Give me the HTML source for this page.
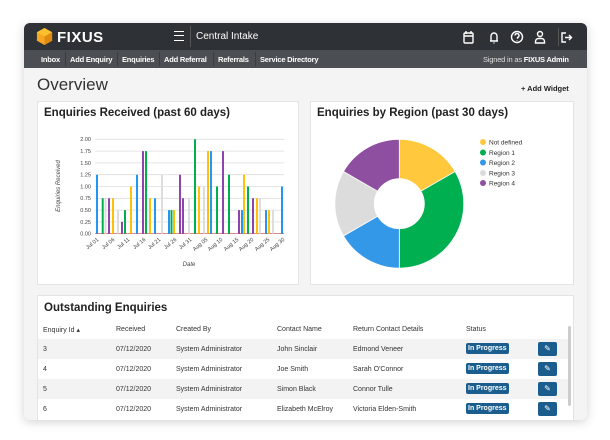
<!DOCTYPE html>
<html><head><meta charset="utf-8"><style>
*{box-sizing:border-box;margin:0;padding:0}
body{width:610px;height:440px;background:#fff;font-family:"Liberation Sans",Arial,sans-serif;position:relative;overflow:hidden}
.frame{position:absolute;left:24px;top:23px;width:563px;height:397px;background:#f4f4f4;border-radius:6px;box-shadow:0 2px 10px rgba(0,0,0,.18);overflow:hidden}
.hdr{position:absolute;left:0;top:0;width:563px;height:27px;background:#2e3135}
.nav{position:absolute;left:0;top:27px;width:563px;height:18px;background:#4b4e52;color:#fff;font-size:7.5px;font-weight:bold;letter-spacing:-.2px}
.nav span{position:absolute;top:5px}
.nav i{position:absolute;top:2px;width:1px;height:14px;background:#3a3d40}
.panel{position:absolute;background:#fff;border:1px solid #e4e4e4}
.t{position:absolute;font-size:11.5px;font-weight:bold;color:#222}
.row{position:absolute;left:0;width:530px;height:20px;font-size:7px;color:#333}
.row span{position:absolute;top:7px}
.badge{position:absolute;left:428px;background:#1b5e8e;color:#fff;font-weight:bold;font-size:7px;padding:2px 2px;border-radius:2px;top:4px!important}
.btn{position:absolute;left:500px;top:3px;width:19px;height:14px;background:#1b5e8e;border-radius:2px;color:#fff;font-size:8px;text-align:center;line-height:14px}
</style></head><body>
<div class="frame">
 <div class="hdr">
  <svg style="position:absolute;left:11px;top:4px" width="19" height="19" viewBox="0 0 20 20"><polygon points="10,1 18,5.5 18,14.5 10,19 2,14.5 2,5.5" fill="#f5a623"/><polygon points="10,1 18,5.5 10,10 2,5.5" fill="#fbc02d"/><polygon points="10,10 18,5.5 18,14.5 10,19" fill="#e08a10"/></svg>
  <div style="position:absolute;left:33px;top:6px;color:#fff;font-size:15px;font-weight:bold;letter-spacing:.5px">FIXUS</div>
  <div style="position:absolute;left:150px;top:8px;width:10px;height:10px;border-top:1.5px solid #fff;border-bottom:1.5px solid #fff"><div style="margin-top:3px;border-top:1.5px solid #fff"></div></div>
  <div style="position:absolute;left:166px;top:3px;width:1px;height:21px;background:#555"></div>
  <div style="position:absolute;left:172px;top:8px;color:#fff;font-size:10px">Central Intake</div>
  <svg style="position:absolute;left:438px;top:7px" width="120" height="14" viewBox="0 0 120 14" fill="none" stroke="#fff" stroke-width="1.4">
   <rect x="2" y="3" width="9" height="10" rx="1"/><line x1="2" y1="6" x2="11" y2="6"/><line x1="4" y1="1" x2="4" y2="4"/><line x1="9" y1="1" x2="9" y2="4"/>
   <path d="M28 11 H36 M29 11 V6 a3 3 0 0 1 6 0 V11 M32 12.5 v1"/>
   <circle cx="55" cy="7" r="5.5"/><path d="M53 5.5 a2 2 0 1 1 2.5 2 v1.2 M55 10.2 v.6"/>
   <circle cx="78" cy="4" r="2.5"/><path d="M73.5 13 v-1.5 a3 3 0 0 1 3-3 h3 a3 3 0 0 1 3 3 V13 Z"/>
   <path d="M104 3 h-4 v9 h4 M103 7.5 h6 M107 5 l2.5 2.5 -2.5 2.5"/>
  </svg>
  <div style="position:absolute;left:534px;top:5px;width:1px;height:18px;background:#555"></div>
 </div>
 <div class="nav">
  <span style="left:17px">Inbox</span><i style="left:41px"></i><span style="left:46px">Add Enquiry</span><i style="left:93px"></i><span style="left:98px">Enquiries</span><i style="left:135px"></i><span style="left:140px">Add Referral</span><i style="left:189px"></i><span style="left:194px">Referrals</span><i style="left:231px"></i><span style="left:236px">Service Directory</span>
  <span style="left:459px;font-weight:normal;color:#ddd">Signed in as <b style="color:#fff">FIXUS Admin</b></span>
 </div>
 <div style="position:absolute;left:13px;top:52px;font-size:17px;color:#333">Overview</div>
 <div style="position:absolute;left:497px;top:61px;font-size:7.5px;font-weight:bold;color:#222">+ Add Widget</div>

 <div class="panel" style="left:13px;top:78px;width:262px;height:184px">
  <div class="t" style="left:6px;top:5px">Enquiries Received (past 60 days)</div>
  <svg style="position:absolute;left:0;top:0" width="262" height="184" viewBox="37 101 262 184" font-family="Liberation Sans,Arial,sans-serif">
   <g stroke="#ddd" stroke-width=".8">
    <line x1="94" y1="138.3" x2="283" y2="138.3"/><line x1="94" y1="150.1" x2="283" y2="150.1"/><line x1="94" y1="161.9" x2="283" y2="161.9"/><line x1="94" y1="173.7" x2="283" y2="173.7"/><line x1="94" y1="185.5" x2="283" y2="185.5"/><line x1="94" y1="197.3" x2="283" y2="197.3"/><line x1="94" y1="209.1" x2="283" y2="209.1"/><line x1="94" y1="220.9" x2="283" y2="220.9"/>
   </g>
   <line x1="94" y1="232.7" x2="283" y2="232.7" stroke="#c44" stroke-width=".6"/>
   <g font-size="5.5" fill="#444" text-anchor="end">
    <text x="90" y="140">2.00</text><text x="90" y="152">1.75</text><text x="90" y="164">1.50</text><text x="90" y="175.5">1.25</text><text x="90" y="187.5">1.00</text><text x="90" y="199">0.75</text><text x="90" y="211">0.50</text><text x="90" y="223">0.25</text><text x="90" y="234.5">0.00</text>
   </g>
   <g stroke-width="2">
    <path stroke="#2196f3" d="M96 232.7V173.7M136 232.7V173.7M154 232.7V197.3M168 232.7V209.1M210 232.7V150.1M241 232.7V209.1M265 232.7V209.1M281 232.7V185.5"/>
    <path stroke="#00b050" d="M101.7 232.7V197.3M124 232.7V209.1M145 232.7V150.1M170.5 232.7V209.1M194 232.7V138.3M216 232.7V185.5M228 232.7V173.7M247 232.7V185.5"/>
    <path stroke="#ddd" d="M104.5 232.7V197.3M117 232.7V209.1M161 232.7V173.7M188 232.7V197.3M203 232.7V185.5M259 232.7V197.3M272 232.7V209.1"/>
    <path stroke="#8e44ad" d="M108 232.7V197.3M121 232.7V220.9M142 232.7V150.1M179 232.7V173.7M182 232.7V197.3M222 232.7V150.1M238 232.7V209.1M252 232.7V197.3"/>
    <path stroke="#ffc107" d="M112 232.7V197.3M130 232.7V185.5M149 232.7V197.3M173 232.7V209.1M198 232.7V185.5M207 232.7V150.1M243 232.7V173.7M256 232.7V197.3M268 232.7V209.1"/>
   </g>
   <g font-size="5.5" fill="#444" text-anchor="end">
    <text transform="translate(98,239) rotate(-40)">Jul 01</text><text transform="translate(114,239) rotate(-40)">Jul 06</text><text transform="translate(129,239) rotate(-40)">Jul 11</text><text transform="translate(145,239) rotate(-40)">Jul 16</text><text transform="translate(160,239) rotate(-40)">Jul 21</text><text transform="translate(176,239) rotate(-40)">Jul 26</text><text transform="translate(191,239) rotate(-40)">Jul 31</text><text transform="translate(207,239) rotate(-40)">Aug 05</text><text transform="translate(222,239) rotate(-40)">Aug 10</text><text transform="translate(238,239) rotate(-40)">Aug 15</text><text transform="translate(253,239) rotate(-40)">Aug 20</text><text transform="translate(269,239) rotate(-40)">Aug 25</text><text transform="translate(284,239) rotate(-40)">Aug 30</text>
   </g>
   <text x="188" y="265" font-size="6" font-style="italic" fill="#444" text-anchor="middle">Date</text>
   <text transform="translate(59,185) rotate(-90)" font-size="6" font-style="italic" fill="#444" text-anchor="middle">Enquiries Received</text>
  </svg>
 </div>

 <div class="panel" style="left:286px;top:78px;width:264px;height:184px">
  <div class="t" style="left:6px;top:5px">Enquiries by Region (past 30 days)</div>
  <svg style="position:absolute;left:0;top:0" width="264" height="184" viewBox="310 101 264 184" font-family="Liberation Sans,Arial,sans-serif">
   <g stroke="#fff" stroke-width=".8">
    <path fill="#ffc83d" d="M398.3 138.3 A64.4 64.4 0 0 1 454.1 170.5 L420 190.2 A25 25 0 0 0 398.3 177.7Z"/>
    <path fill="#00b050" d="M454.1 170.5 A64.4 64.4 0 0 1 398.3 267.1 L398.3 227.7 A25 25 0 0 0 420 190.2Z"/>
    <path fill="#3498e8" d="M398.3 267.1 A64.4 64.4 0 0 1 342.5 234.9 L376.6 215.2 A25 25 0 0 0 398.3 227.7Z"/>
    <path fill="#dcdcdc" d="M342.5 234.9 A64.4 64.4 0 0 1 342.5 170.5 L376.6 190.2 A25 25 0 0 0 376.6 215.2Z"/>
    <path fill="#8e4fa0" d="M342.5 170.5 A64.4 64.4 0 0 1 398.3 138.3 L398.3 177.7 A25 25 0 0 0 376.6 190.2Z"/>
   </g>
   <g font-size="6.5" fill="#333">
    <circle cx="482" cy="141" r="3" fill="#ffc83d"/><text x="488" y="143.5">Not defined</text>
    <circle cx="482" cy="151.5" r="3" fill="#00b050"/><text x="488" y="154">Region 1</text>
    <circle cx="482" cy="161.5" r="3" fill="#3498e8"/><text x="488" y="164">Region 2</text>
    <circle cx="482" cy="172" r="3" fill="#dcdcdc"/><text x="488" y="174.5">Region 3</text>
    <circle cx="482" cy="182" r="3" fill="#8e4fa0"/><text x="488" y="184.5">Region 4</text>
   </g>
  </svg>
 </div>

 <div class="panel" style="left:13px;top:272px;width:537px;height:140px">
  <div class="t" style="left:6px;top:6px">Outstanding Enquiries</div>
  <div class="row" style="top:23px;height:20px"><span style="left:5px">Enquiry Id ▴</span><span style="left:78px">Received</span><span style="left:138px">Created By</span><span style="left:239px">Contact Name</span><span style="left:315px">Return Contact Details</span><span style="left:428px">Status</span></div>
  <div class="row" style="top:43px;background:#f3f3f3"><span style="left:5px">3</span><span style="left:78px">07/12/2020</span><span style="left:138px">System Administrator</span><span style="left:239px">John Sinclair</span><span style="left:315px">Edmond Veneer</span><span class="badge">In Progress</span><div class="btn">✎</div></div>
  <div class="row" style="top:63px"><span style="left:5px">4</span><span style="left:78px">07/12/2020</span><span style="left:138px">System Administrator</span><span style="left:239px">Joe Smith</span><span style="left:315px">Sarah O'Connor</span><span class="badge">In Progress</span><div class="btn">✎</div></div>
  <div class="row" style="top:83px;background:#f3f3f3"><span style="left:5px">5</span><span style="left:78px">07/12/2020</span><span style="left:138px">System Administrator</span><span style="left:239px">Simon Black</span><span style="left:315px">Connor Tulle</span><span class="badge">In Progress</span><div class="btn">✎</div></div>
  <div class="row" style="top:103px"><span style="left:5px">6</span><span style="left:78px">07/12/2020</span><span style="left:138px">System Administrator</span><span style="left:239px">Elizabeth McElroy</span><span style="left:315px">Victoria Elden-Smith</span><span class="badge">In Progress</span><div class="btn">✎</div></div>
  <div style="position:absolute;left:530px;top:30px;width:3px;height:80px;background:#ccc;border-radius:2px"></div>
 </div>
</div>
</body></html>
